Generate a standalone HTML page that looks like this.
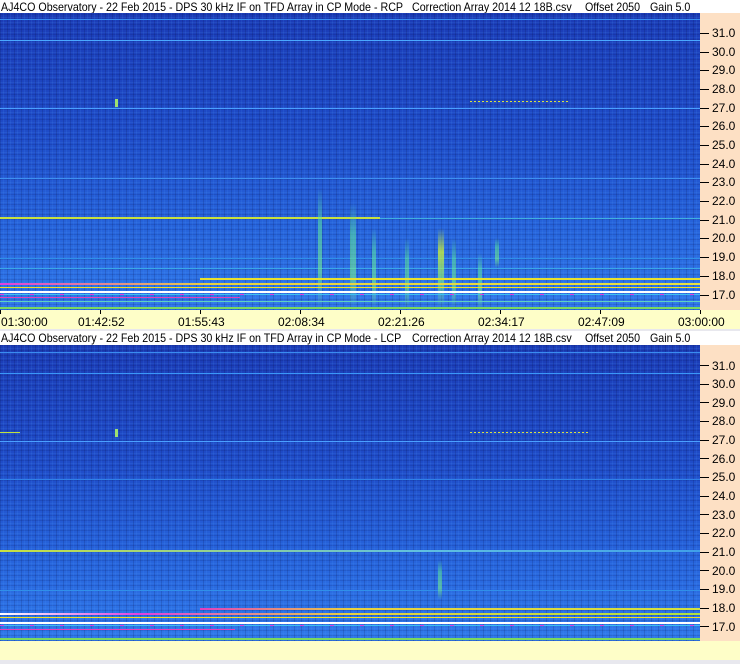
<!DOCTYPE html>
<html><head><meta charset="utf-8"><style>
*{margin:0;padding:0}
body{width:740px;height:664px;background:#e8e8ee;position:relative;overflow:hidden;font-family:"Liberation Sans",sans-serif;font-size:12px}
.hdr{position:absolute;left:0;width:740px;height:14px;background:#fff;color:#000;line-height:14px;white-space:pre;font-size:12px}
.hdr span{position:absolute;top:0;transform:scaleX(.89);transform-origin:left}
.spec{position:absolute;left:0;width:700px;overflow:hidden;
background:
repeating-linear-gradient(90deg,rgba(0,0,40,.14) 0 1px,transparent 1px 3px,rgba(80,160,255,.12) 3px 4px,transparent 4px 7px),
repeating-linear-gradient(0deg,rgba(0,0,60,.12) 0 1px,transparent 1px 2px,rgba(90,170,255,.10) 2px 3px,transparent 3px 5px),
linear-gradient(#1b3cb6,#1f4cc8 40%,#2662da 70%,#3078ea)}
.ax{position:absolute;left:700px;width:40px;background:#fde0c4}
.tk{position:absolute;left:0;width:9px;height:1px;background:#000}
.tl{position:absolute;left:12px;font-size:12px;line-height:12px;color:#000}
.tb{position:absolute;left:0;width:740px;height:19px;background:#fefec8}
.tt{position:absolute;top:0;width:1px;height:4px;background:#000}
.tx{position:absolute;top:6px;font-size:12px;line-height:12px}
.l{position:absolute;height:1px}
.v{position:absolute;width:4px;border-radius:2px;background:linear-gradient(transparent,rgba(90,230,160,.55) 30%,rgba(120,240,140,.6) 70%,transparent)}
</style></head><body>

<div class="hdr" style="top:0"><span style="left:1px">AJ4CO Observatory - 22 Feb 2015 - DPS 30 kHz IF on TFD Array in CP Mode - RCP</span><span style="left:412px">Correction Array 2014 12 18B.csv</span><span style="left:585px">Offset 2050</span><span style="left:650px">Gain 5.0</span></div>
<div class="spec" style="top:13px;height:297px">
 <div class="l" style="top:6px;left:0;width:700px;background:#3a8cf0"></div>
 <div class="l" style="top:27px;left:0;width:700px;background:#4aa8ff"></div>
 <div class="l" style="top:88px;left:470px;width:100px;background:repeating-linear-gradient(90deg,#d8e040 0 2px,transparent 2px 4px)"></div>
 <div class="l" style="top:86px;left:115px;width:3px;height:8px;background:#9ee070"></div>
 <div class="l" style="top:95px;left:0;width:700px;background:#4aa0ff"></div>
 <div class="l" style="top:165px;left:0;width:700px;background:#3e90f0"></div>
 <div class="l" style="top:204px;left:0;width:380px;height:2px;background:#c8e040"></div>
 <div class="l" style="top:205px;left:380px;width:320px;background:#40b0e0"></div>
 <div class="l" style="top:255px;left:0;width:700px;background:#3aa8e8"></div>
 <div class="l" style="top:245px;left:0;width:700px;background:#3090e8"></div>
 <div class="v" style="left:318px;top:175px;height:120px"></div>
 <div class="v" style="left:350px;top:190px;height:105px;width:6px"></div>
 <div class="v" style="left:372px;top:215px;height:80px"></div>
 <div class="v" style="left:405px;top:225px;height:70px"></div>
 <div class="v" style="left:438px;top:215px;height:80px;width:6px;background:linear-gradient(transparent,rgba(200,240,60,.8) 30%,rgba(120,240,140,.6) 70%,transparent)"></div>
 <div class="v" style="left:452px;top:225px;height:70px"></div>
 <div class="v" style="left:478px;top:240px;height:57px"></div>
 <div class="v" style="left:495px;top:225px;height:30px"></div>
 <div class="l" style="top:265px;left:200px;width:500px;height:2px;background:#e8e030"></div>
 <div class="l" style="top:270px;left:0;width:700px;height:2px;background:linear-gradient(90deg,#e040e0,#e8d040 30%,#e8e040)"></div>
 <div class="l" style="top:274px;left:0;width:700px;background:#f0e020"></div>
 <div class="l" style="top:278px;left:0;width:700px;height:2px;background:#fff"></div>
 <div class="l" style="top:281px;left:0;width:700px;background:repeating-linear-gradient(90deg,#e040e0 0 4px,#40c0f0 4px 30px)"></div>
 <div class="l" style="top:284px;left:0;width:240px;height:1px;background:#e040c0"></div>
 <div class="l" style="top:288px;left:0;width:700px;background:#60d0c0"></div>
 <div class="l" style="top:294px;left:0;width:700px;height:2px;background:#7ad860"></div>
</div>
<div class="ax" style="top:13px;height:297px">
 <div class="tk" style="top:20px"></div><div class="tl" style="top:14px">31.0</div>
 <div class="tk" style="top:39px"></div><div class="tl" style="top:33px">30.0</div>
 <div class="tk" style="top:57px"></div><div class="tl" style="top:51px">29.0</div>
 <div class="tk" style="top:76px"></div><div class="tl" style="top:70px">28.0</div>
 <div class="tk" style="top:95px"></div><div class="tl" style="top:89px">27.0</div>
 <div class="tk" style="top:113px"></div><div class="tl" style="top:107px">26.0</div>
 <div class="tk" style="top:132px"></div><div class="tl" style="top:126px">25.0</div>
 <div class="tk" style="top:151px"></div><div class="tl" style="top:145px">24.0</div>
 <div class="tk" style="top:169px"></div><div class="tl" style="top:163px">23.0</div>
 <div class="tk" style="top:188px"></div><div class="tl" style="top:182px">22.0</div>
 <div class="tk" style="top:207px"></div><div class="tl" style="top:201px">21.0</div>
 <div class="tk" style="top:225px"></div><div class="tl" style="top:219px">20.0</div>
 <div class="tk" style="top:244px"></div><div class="tl" style="top:238px">19.0</div>
 <div class="tk" style="top:263px"></div><div class="tl" style="top:257px">18.0</div>
 <div class="tk" style="top:282px"></div><div class="tl" style="top:276px">17.0</div>
</div>
<div class="tb" style="top:310px">
 <div class="tt" style="left:0"></div><div class="tt" style="left:100px"></div><div class="tt" style="left:200px"></div><div class="tt" style="left:300px"></div><div class="tt" style="left:400px"></div><div class="tt" style="left:500px"></div><div class="tt" style="left:600px"></div><div class="tt" style="left:700px"></div>
 <div class="tx" style="left:1px">01:30:00</div><div class="tx" style="left:78px">01:42:52</div><div class="tx" style="left:178px">01:55:43</div><div class="tx" style="left:278px">02:08:34</div><div class="tx" style="left:378px">02:21:26</div><div class="tx" style="left:478px">02:34:17</div><div class="tx" style="left:578px">02:47:09</div><div class="tx" style="left:678px">03:00:00</div>
</div>

<div class="hdr" style="top:331px"><span style="left:1px">AJ4CO Observatory - 22 Feb 2015 - DPS 30 kHz IF on TFD Array in CP Mode - LCP</span><span style="left:412px">Correction Array 2014 12 18B.csv</span><span style="left:585px">Offset 2050</span><span style="left:650px">Gain 5.0</span></div>
<div class="spec" style="top:345px;height:296px">
 <div class="l" style="top:7px;left:0;width:700px;background:#3a8cf0"></div>
 <div class="l" style="top:28px;left:0;width:700px;background:#3a98f8"></div>
 <div class="l" style="top:87px;left:470px;width:120px;background:repeating-linear-gradient(90deg,#d8e040 0 2px,transparent 2px 4px)"></div>
 <div class="l" style="top:87px;left:0;width:20px;background:#c0e040"></div>
 <div class="l" style="top:84px;left:115px;width:3px;height:8px;background:#9ee070"></div>
 <div class="l" style="top:96px;left:0;width:700px;background:#4aa0ff"></div>
 <div class="l" style="top:205px;left:0;width:700px;height:2px;background:linear-gradient(90deg,#c8e040,#60c0e0 60%,#40a0e8)"></div>
 <div class="l" style="top:134px;left:0;width:700px;background:#3080e8"></div>
 <div class="l" style="top:245px;left:0;width:700px;background:#3090e8"></div>
 <div class="v" style="left:438px;top:215px;height:40px"></div>
 <div class="l" style="top:263px;left:200px;width:500px;height:2px;background:linear-gradient(90deg,#e040c0,#e8d040 30%,#d0e040)"></div>
 <div class="l" style="top:268px;left:0;width:700px;height:2px;background:linear-gradient(90deg,#fff,#e040e0 20%,#e8d040 50%,#b0e040)"></div>
 <div class="l" style="top:272px;left:0;width:700px;background:#f0e020"></div>
 <div class="l" style="top:277px;left:0;width:700px;height:2px;background:#fff"></div>
 <div class="l" style="top:280px;left:0;width:700px;background:repeating-linear-gradient(90deg,#e040e0 0 4px,#40c0f0 4px 30px)"></div>
 <div class="l" style="top:284px;left:0;width:235px;height:1px;background:#e040c0"></div>
 <div class="l" style="top:293px;left:0;width:700px;height:2px;background:#7ad860"></div>
</div>
<div class="ax" style="top:345px;height:296px">
 <div class="tk" style="top:20px"></div><div class="tl" style="top:15px">31.0</div>
 <div class="tk" style="top:39px"></div><div class="tl" style="top:33px">30.0</div>
 <div class="tk" style="top:57px"></div><div class="tl" style="top:52px">29.0</div>
 <div class="tk" style="top:76px"></div><div class="tl" style="top:70px">28.0</div>
 <div class="tk" style="top:95px"></div><div class="tl" style="top:89px">27.0</div>
 <div class="tk" style="top:113px"></div><div class="tl" style="top:108px">26.0</div>
 <div class="tk" style="top:132px"></div><div class="tl" style="top:126px">25.0</div>
 <div class="tk" style="top:151px"></div><div class="tl" style="top:145px">24.0</div>
 <div class="tk" style="top:169px"></div><div class="tl" style="top:164px">23.0</div>
 <div class="tk" style="top:188px"></div><div class="tl" style="top:182px">22.0</div>
 <div class="tk" style="top:207px"></div><div class="tl" style="top:201px">21.0</div>
 <div class="tk" style="top:225px"></div><div class="tl" style="top:220px">20.0</div>
 <div class="tk" style="top:244px"></div><div class="tl" style="top:238px">19.0</div>
 <div class="tk" style="top:263px"></div><div class="tl" style="top:257px">18.0</div>
 <div class="tk" style="top:281px"></div><div class="tl" style="top:276px">17.0</div>
</div>
<div class="tb" style="top:641px"></div>
</body></html>
